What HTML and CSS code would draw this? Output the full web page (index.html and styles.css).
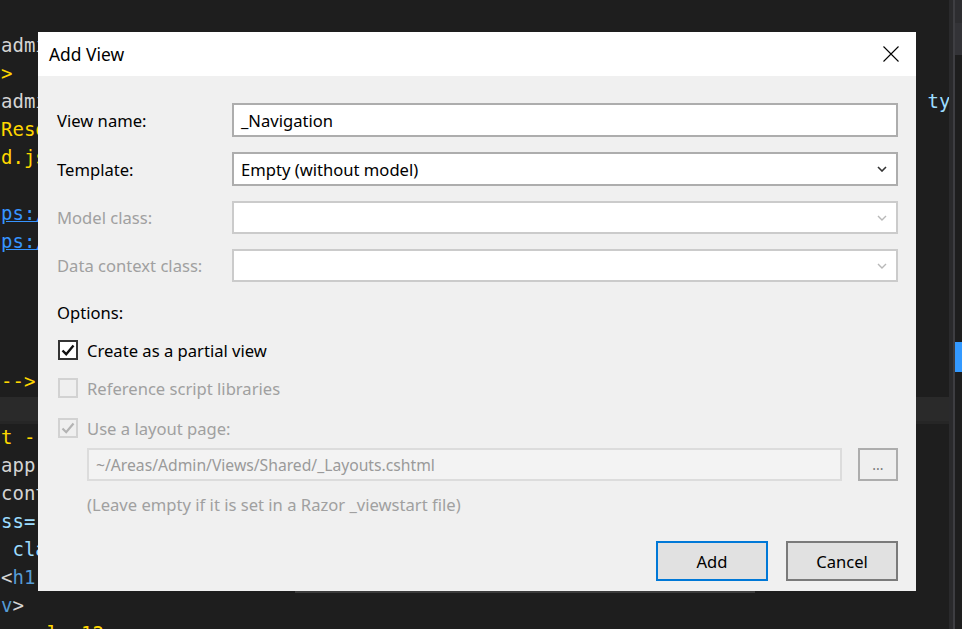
FILE: index.html
```html
<!DOCTYPE html>
<html>
<head>
<meta charset="utf-8">
<link rel="stylesheet" href="styles.css">
</head>
<body>
<div class="screen">
  <div class="editor">
    <div class="code">
      <div class="ln"><span class="gy">admin-layout.css" rel="stylesheet" /&gt;</span></div>
      <div class="ln"><span class="yl">&gt;</span></div>
      <div class="ln"><span class="gy">admin.css" rel="stylesheet" href="~/lib/admin/sidebar/navigation/menu.min.css?v</span><span class="tan">"</span> <span class="lb">type="text/css"</span></div>
      <div class="ln"><span class="yl">Resources</span></div>
      <div class="ln"><span class="yl">d.js</span></div>
      <div class="ln"></div>
      <div class="ln"><span class="lk">ps://code.jquery.com</span></div>
      <div class="ln"><span class="lk">ps://cdn.jsdelivr.net</span></div>
      <div class="ln"></div>
      <div class="ln"></div>
      <div class="ln"></div>
      <div class="ln"></div>
      <div class="ln"><span class="yl">--&gt;</span></div>
      <div class="ln band"></div>
      <div class="ln"><span class="yl">t --&gt;</span></div>
      <div class="ln"><span class="gy">app</span></div>
      <div class="ln"><span class="gy">content</span></div>
      <div class="ln"><span class="lb">ss=</span></div>
      <div class="ln"> <span class="lb">class</span></div>
      <div class="ln"><span class="gy">&lt;</span><span class="bl">h1</span></div>
      <div class="ln"><span class="bl">v</span><span class="gy">&gt;</span></div>
      <div class="ln"><span class="gy">   </span><span class="yl">ala 12</span></div>
    </div>
    <div class="scroll">
      <div class="sb-line"></div>
      <div class="sb-sep"></div>
      <div class="sb-track"><div class="sb-top"></div><div class="sb-mark"></div></div>
    </div>
  </div>
  <div class="hbar"></div>

  <div class="dialog">
    <div class="titlebar">
      <span class="title">Add View</span>
      <svg class="close" width="16" height="16" viewBox="0 0 16 16"><path d="M0.5 0.5 L15.5 15.5 M15.5 0.5 L0.5 15.5" stroke="#000" stroke-width="1.1" fill="none"/></svg>
    </div>
    <div class="body">
      <div class="form">
        <label class="lbl">View name:</label>
        <div class="field"><span>_Navigation</span></div>
        <label class="lbl">Template:</label>
        <div class="field select"><span>Empty (without model)</span>
          <svg class="chev" width="10" height="6" viewBox="0 0 10 6"><path d="M1 1 L5 5 L9 1" stroke="#333" stroke-width="1.6" fill="none"/></svg>
        </div>
        <label class="lbl dis">Model class:</label>
        <div class="field select disabled">
          <svg class="chev" width="10" height="6" viewBox="0 0 10 6"><path d="M1 1 L5 5 L9 1" stroke="#b8b8b8" stroke-width="1.4" fill="none"/></svg>
        </div>
        <label class="lbl dis">Data context class:</label>
        <div class="field select disabled">
          <svg class="chev" width="10" height="6" viewBox="0 0 10 6"><path d="M1 1 L5 5 L9 1" stroke="#b8b8b8" stroke-width="1.4" fill="none"/></svg>
        </div>
      </div>
      <div class="options">Options:</div>
      <div class="check-row r1">
        <span class="cb on"><svg width="16" height="16" viewBox="0 0 16 16"><path d="M2.5 8.5 L6.2 12.2 L13.5 3.5" stroke="#111" stroke-width="2.4" fill="none"/></svg></span>
        <span class="clabel">Create as a partial view</span>
      </div>
      <div class="check-row r2">
        <span class="cb off"></span>
        <span class="clabel dis">Reference script libraries</span>
      </div>
      <div class="check-row r3">
        <span class="cb off"><svg width="16" height="16" viewBox="0 0 16 16"><path d="M2.5 8.5 L6.2 12.2 L13.5 3.5" stroke="#b3b3b3" stroke-width="2.2" fill="none"/></svg></span>
        <span class="clabel dis">Use a layout page:</span>
      </div>
      <div class="layout-row">
        <div class="layout-field">~/Areas/Admin/Views/Shared/_Layouts.cshtml</div>
        <div class="dots">...</div>
      </div>
      <div class="hint">(Leave empty if it is set in a Razor _viewstart file)</div>
      <div class="buttons">
        <div class="btn primary">Add</div>
        <div class="btn">Cancel</div>
      </div>
    </div>
  </div>
</div>
</body>
</html>
```

FILE: styles.css
```css
* { box-sizing: border-box; }
html, body { margin: 0; padding: 0; }
body { background: #1e1e1e; width: 962px; height: 629px; overflow: hidden; }
.screen { position: relative; width: 962px; height: 629px; overflow: hidden; }

.editor { display: flex; width: 962px; height: 629px; }
.code {
  width: 949px; flex: none; overflow: hidden; padding-top: 31px;
  font-family: "DejaVu Sans Mono", "Liberation Mono", monospace; font-size: 19px;
}
.ln { height: 28px; line-height: 28px; padding-left: 1px; white-space: pre; }
.band { background: #2a2a2a; border-bottom: 3px solid #262626; height: 27px; margin-top: 2px; margin-bottom: -1px; }
.gy { color: #d4d4d4; }
.yl { color: #ffd700; }
.lb { color: #9cdcfe; }
.bl { color: #569cd6; }
.tan { color: #ce9178; }
.lk { color: #3794ff; text-decoration: underline; }

.scroll { display: flex; width: 13px; flex: none; }
.sb-line { width: 4px; background: #2a2a2c; }
.sb-sep { width: 2px; background: #3e3e42; }
.sb-track { width: 7px; background: #1e1e1e; display: flex; flex-direction: column; }
.sb-top { background: #2d2d30; border-bottom: 32px solid #333337; height: 55px; }
.sb-mark { margin-top: 287px; height: 30px; background: #3399ff; }

.hbar { position: absolute; left: 295px; top: 591px; width: 460px; height: 2px; background: #3c3c3c; }

.dialog {
  position: absolute; left: 38px; top: 32px; width: 878px; height: 559px;
  background: #f0f0f0; display: flex; flex-direction: column;
  font-family: "Noto Sans", "Open Sans", sans-serif; font-size: 16.6px; color: #000;
}
.titlebar {
  height: 44px; background: #fff; display: flex; align-items: center;
  justify-content: space-between; padding: 0 17px 0 11px;
}
.title { font-size: 17.4px; color: #000; }
.close { display: block; margin-top: -1px; }

.body { display: flex; flex-direction: column; padding: 27px 18px 0 19px; }
.form {
  display: grid; grid-template-columns: 175px 1fr; row-gap: 15px;
  align-items: center;
}
.dis { color: #a0a0a0; }
.field {
  height: 34px; border: 2px solid #adadad; background: #fff;
  display: flex; align-items: center;
  padding: 0 9px 0 7px;
}
.field.disabled { border-color: #cbcbcb; height: 33px; }
.chev { display: block; margin-left: auto; }

.options { margin-top: 20px; height: 22px; line-height: 22px; }
.check-row { display: flex; align-items: center; height: 22px; }
.check-row.r1 { margin-top: 15px; }
.check-row.r2 { margin-top: 16px; }
.check-row.r3 { margin-top: 18px; }
.cb {
  width: 20px; height: 20px; margin-left: 1px; margin-right: 9px;
  display: flex; align-items: center; justify-content: center; background: #fff;
}
.cb.on { border: 2px solid #333; }
.cb.off { border: 2px solid #d2d2d2; background: #efefef; }

.layout-row { display: flex; margin-top: 9px; margin-left: 30px; gap: 16px; height: 33px; }
.layout-field {
  flex: 1; border: 2px solid #dcdcdc; background: #f3f3f3; color: #9a9a9a;
  display: flex; align-items: center; padding-left: 7px; font-size: 15.7px;
}
.dots {
  width: 40px; border: 2px solid #adadad; background: #efefef; color: #777;
  display: flex; align-items: center; justify-content: center; font-size: 14px;
}
.hint { margin-left: 30px; margin-top: 13px; color: #a0a0a0; height: 22px; line-height: 22px; }

.buttons { display: flex; justify-content: flex-end; gap: 18px; margin-top: 25px; }
.btn {
  width: 112px; height: 40px; background: #e1e1e1; border: 2px solid #7a7a7a;
  display: flex; align-items: center; justify-content: center;
}
.btn.primary { border-color: #0078d7; }
```
